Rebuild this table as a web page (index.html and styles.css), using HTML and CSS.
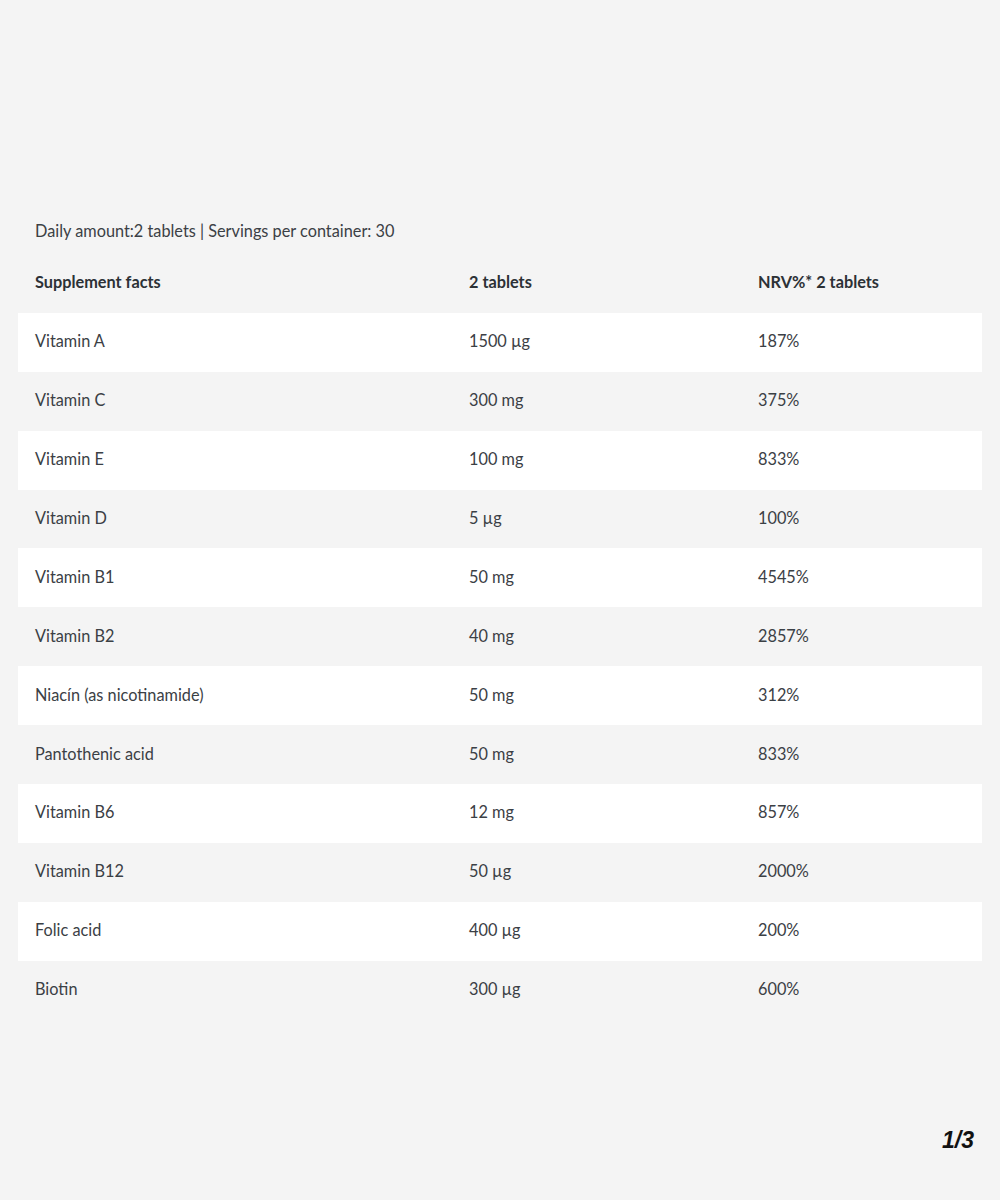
FILE: index.html
```html
<!DOCTYPE html>
<html>
<head>
<meta charset="utf-8">
<link rel="stylesheet" href="styles.css">
</head>
<body>
<div class="page">
  <p class="daily">Daily amount:2 tablets | Servings per container: 30</p>
  <div class="table">
    <div class="row head"><span>Supplement facts</span><span>2 tablets</span><span>NRV%* 2 tablets</span></div>
    <div class="row alt"><span>Vitamin A</span><span>1500 µg</span><span>187%</span></div>
    <div class="row"><span>Vitamin C</span><span>300 mg</span><span>375%</span></div>
    <div class="row alt"><span>Vitamin E</span><span>100 mg</span><span>833%</span></div>
    <div class="row"><span>Vitamin D</span><span>5 µg</span><span>100%</span></div>
    <div class="row alt"><span>Vitamin B1</span><span>50 mg</span><span>4545%</span></div>
    <div class="row"><span>Vitamin B2</span><span>40 mg</span><span>2857%</span></div>
    <div class="row alt"><span>Niacín (as nicotinamide)</span><span>50 mg</span><span>312%</span></div>
    <div class="row"><span>Pantothenic acid</span><span>50 mg</span><span>833%</span></div>
    <div class="row alt"><span>Vitamin B6</span><span>12 mg</span><span>857%</span></div>
    <div class="row"><span>Vitamin B12</span><span>50 µg</span><span>2000%</span></div>
    <div class="row alt"><span>Folic acid</span><span>400 µg</span><span>200%</span></div>
    <div class="row"><span>Biotin</span><span>300 µg</span><span>600%</span></div>
  </div>
  <div class="pager">1/3</div>
</div>
</body>
</html>
```
FILE: styles.css
```css
html, body {
  margin: 0;
  padding: 0;
  background: #f4f4f4;
}
.page {
  width: 1000px;
  height: 1200px;
  box-sizing: border-box;
  padding: 220px 18px 0 18px;
  font-family: Lato, "Open Sans", sans-serif;
  color: #3b4045;
  display: flex;
  flex-direction: column;
}
.daily {
  margin: 0 0 0 17px;
  font-size: 16.3px;
  line-height: 22px;
  color: #3b4045;
}
.table {
  margin-top: 12px;
  display: flex;
  flex-direction: column;
}
.row {
  display: grid;
  grid-template-columns: 434px 289px 1fr;
  height: 58.9px;
  box-sizing: border-box;
  padding: 0 0 3px 17px;
  align-items: center;
  font-size: 16.3px;
  color: #3b4045;
}
.row.alt {
  background: #fff;
}
.row.head {
  font-weight: 700;
  color: #2c3136;
}
.pager {
  margin-top: auto;
  margin-bottom: 46px;
  align-self: flex-end;
  margin-right: 8px;
  font-family: "Liberation Sans", Arial, sans-serif;
  font-weight: 700;
  font-style: italic;
  font-size: 23px;
  color: #111;
}
```
